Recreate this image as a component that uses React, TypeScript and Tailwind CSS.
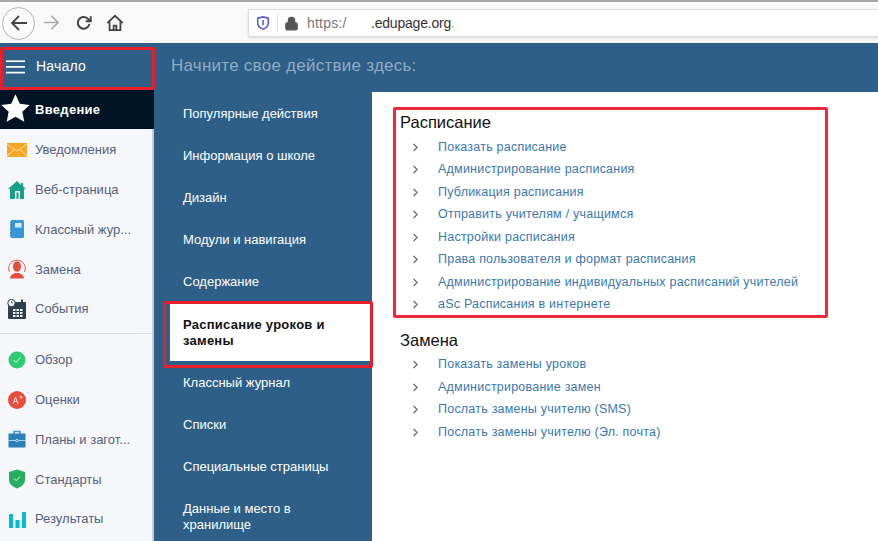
import { ChevronRight, Lock } from 'lucide-react';
import type { ReactNode } from 'react';

const icons: Record<string, ReactNode> = {
  mail: (
    <svg viewBox="0 0 20 16" className="w-[20px] h-[16px]">
      <rect y="1" width="20" height="14" fill="#f5a623" />
      <path d="M0 2l10 7 10-7M0 14l7-6.500M20 14l-7-6.500" fill="none" stroke="#fde3ae" strokeWidth="1" />
    </svg>
  ),
  home: (
    <svg viewBox="0 0 20 20" className="w-[20px] h-[20px]">
      <path d="M10 1L1 9h2v10h14V9h2l-3-2.700V3h-2v2L10 1z" fill="#16a085" />
      <rect x="8" y="11" width="5" height="8" fill="#f5f7fa" />
      <rect x="9.500" y="12.500" width="2" height="6.500" fill="#16a085" />
    </svg>
  ),
  book: (
    <svg viewBox="0 0 20 20" className="w-[20px] h-[20px]">
      <rect x="3.500" y="1" width="13.500" height="18" rx="1.500" fill="#3498db" />
      <path d="M3 3.500h2M3 6h2M3 8.500h2M3 11h2M3 13.500h2M3 16h2" stroke="#2471a3" strokeWidth="0.800" />
      <rect x="8" y="4" width="6.500" height="4.500" fill="#d6eaf8" />
    </svg>
  ),
  person: (
    <svg viewBox="0 0 20 20" className="w-[20px] h-[20px]">
      <path d="M2.500 13A8.300 8.300 0 1 1 17.500 13" fill="none" stroke="#e74c3c" strokeWidth="0.900" />
      <ellipse cx="10" cy="7.500" rx="4" ry="5.200" fill="#e74c3c" />
      <path d="M3 19.500c.3-3.500 3-4.500 5-5.500h4c2 1 4.700 2 5 5.500z" fill="#e74c3c" />
    </svg>
  ),
  calendar: (
    <svg viewBox="0 0 20 20" className="w-[20px] h-[20px]">
      <rect x="1" y="3" width="18" height="17" rx="1" fill="#2c3e50" />
      <rect x="14" y="0.500" width="2" height="4" fill="#2c3e50" />
      <circle cx="4.500" cy="4" r="3.700" fill="#f5f7fa" stroke="#2c3e50" />
      <path d="M4.500 2v2h1.500" fill="none" stroke="#2c3e50" strokeWidth="0.700" />
      <path d="M6 10h2.500v2H6zM9.500 10H12v2H9.500zM13 10h2.500v2H13zM6 13h2.500v2H6zM9.500 13H12v2H9.500zM13 13h2.500v2H13zM6 16h2.500v2H6zM9.500 16H12v2H9.500zM13 16h2.500v2H13z" fill="#ecf0f1" />
    </svg>
  ),
  check: (
    <svg viewBox="0 0 20 20" className="w-[20px] h-[20px]">
      <circle cx="10" cy="10" r="8.500" fill="#2ecc71" />
      <path d="M6.500 10l2.500 2.500 4.500-5" fill="none" stroke="#e8f8ef" strokeWidth="1" />
    </svg>
  ),
  grade: (
    <svg viewBox="0 0 20 20" className="w-[20px] h-[20px]">
      <circle cx="10" cy="10" r="9" fill="#e74c3c" />
      <path d="M6 14l2.500-7 2.500 7M7 11.500h3M12.500 7h3M14 5.500v3" fill="none" stroke="#fbdcd8" strokeWidth="1" />
    </svg>
  ),
  case: (
    <svg viewBox="0 0 20 20" className="w-[20px] h-[20px]">
      <path d="M7 5V2.500h6V5" fill="none" stroke="#3498db" strokeWidth="1.500" />
      <rect x="1.500" y="4.500" width="17" height="14" fill="#2980b9" />
      <path d="M1.500 11.500h17" stroke="#d6eaf8" strokeWidth="0.800" />
      <circle cx="10" cy="11.500" r="1.300" fill="#2980b9" stroke="#d6eaf8" strokeWidth="0.800" />
    </svg>
  ),
  shield: (
    <svg viewBox="0 0 20 20" className="w-[20px] h-[20px]">
      <path d="M10 .5L18 3v8c0 4-4 7-8 8.500C6 18 2 15 2 11V3z" fill="#27ae60" />
      <path d="M7 9.500l2.200 2.200 3.800-4.200" fill="none" stroke="#dff5e8" strokeWidth="1" />
    </svg>
  ),
  bars: (
    <svg viewBox="0 0 20 20" className="w-[20px] h-[20px]">
      <path d="M2 5h4v14H2zM8.500 11h4v8h-4zM15 3h4v16h-4z" fill="#00bcd4" />
    </svg>
  ),
};

const topItems = [
  { icon: 'mail', label: 'Уведомления' },
  { icon: 'home', label: 'Веб-страница' },
  { icon: 'book', label: 'Классный жур...' },
  { icon: 'person', label: 'Замена' },
  { icon: 'calendar', label: 'События' },
];

const bottomItems = [
  { icon: 'check', label: 'Обзор' },
  { icon: 'grade', label: 'Оценки' },
  { icon: 'case', label: 'Планы и загот...' },
  { icon: 'shield', label: 'Стандарты' },
  { icon: 'bars', label: 'Результаты' },
];

const timetable = [
  'Показать расписание',
  'Администрирование расписания',
  'Публикация расписания',
  'Отправить учителям / учащимся',
  'Настройки расписания',
  'Права пользователя и формат расписания',
  'Администрирование индивидуальных расписаний учителей',
  'aSc Расписания в интернете',
];

const substitutions = [
  'Показать замены уроков',
  'Администрирование замен',
  'Послать замены учителю (SMS)',
  'Послать замены учителю (Эл. почта)',
];

function SideRow({ icon, label }: { icon: string; label: string }) {
  return (
    <div className="h-[39.800px] flex items-center pl-[7px] shrink-0">
      <span className="w-[20px] h-[20px] flex items-center justify-center shrink-0">{icons[icon]}</span>
      <span className="ml-[8px] text-[13px] text-[#56607a] whitespace-nowrap">{label}</span>
    </div>
  );
}

function MenuRow({ children }: { children: ReactNode }) {
  return (
    <div className="h-[42px] flex items-center pl-[29px] pr-[20px] text-[13px] leading-[16px] text-white shrink-0">
      {children}
    </div>
  );
}

function LinkGroup({ title, links }: { title: string; links: string[] }) {
  return (
    <div>
      <h2 className="text-[16.500px] leading-[20px] text-[#111] font-normal">{title}</h2>
      <ul className="mt-[4px]">
        {links.map((link) => (
          <li key={link} className="h-[22.500px] flex items-center">
            <ChevronRight className="w-[13px] h-[13px] ml-[9px] text-[#666]" strokeWidth={2} />
            <span className="ml-[16px] text-[12.500px] tracking-[0.220px] text-[#3a78ae] whitespace-nowrap">{link}</span>
          </li>
        ))}
      </ul>
    </div>
  );
}

export default function App() {
  return (
    <div className="w-[878px] h-[541px] overflow-hidden relative bg-white font-['Liberation_Sans',Arial,sans-serif]">
      {/* browser toolbar */}
      <div className="h-[43px] bg-[#f9f9fa] border-t-2 border-[#a8a8a8] flex items-center relative">
        <div className="ml-[2px] mt-[1px] w-[33px] h-[33px] rounded-full border border-[#b5b5b5] bg-[#fbfbfb] flex items-center justify-center shrink-0">
          <svg viewBox="0 0 20 20" className="w-[20px] h-[20px]" fill="none" stroke="#444" strokeWidth="1.800">
            <path d="M18 10H3M10 3l-7 7 7 7" />
          </svg>
        </div>
        <svg viewBox="0 0 20 20" className="w-[19px] h-[19px] ml-[7px] shrink-0" fill="none" stroke="#aaa" strokeWidth="1.600">
          <path d="M2 10h15M10 3l7 7-7 7" />
        </svg>
        <svg viewBox="0 0 20 20" className="w-[18px] h-[18px] ml-[14px] shrink-0" fill="none" stroke="#444" strokeWidth="2.200">
          <path d="M16 11a6.500 6.500 0 1 1-2-6l3 2.500" />
          <path d="M17.500 2.500v5.500h-5.500" />
        </svg>
        <svg viewBox="0 0 20 20" className="w-[18px] h-[18px] ml-[13px] shrink-0" fill="none" stroke="#444" strokeWidth="2">
          <path d="M1.500 10L10 2l8.500 8M4 8.500V18h12V8.500M8.500 18v-5h3v5" />
        </svg>
        <div className="ml-[124px] w-[640px] h-[28px] mt-[1px] bg-white border border-[#dcdcdc] border-r-0 rounded-l-[2px] flex items-center shadow-sm shrink-0">
          <svg viewBox="0 0 16 16" className="w-[14px] h-[14px] ml-[7px]" fill="none">
            <path d="M8 1l6 1.500V8c0 3.500-3 6-6 7-3-1-6-3.500-6-7V2.500z" stroke="#5b5bd6" strokeWidth="1.800" />
            <path d="M8 4.500v6" stroke="#5b5bd6" strokeWidth="1.800" />
          </svg>
          <span className="ml-[7px] w-px h-[20px] bg-[#e3e3e3]" />
          <Lock className="w-[15px] h-[15px] ml-[6px] text-[#555] fill-[#555]" strokeWidth={2} />
          <span className="ml-[8px] text-[14px] tracking-[0.200px] text-[#777] w-[64px]">https:/</span>
          <span className="text-[14px] tracking-[-0.200px] text-[#333]">.edupage.org</span>
          <span className="text-[11px] text-[#aaa]">,</span>
        </div>
      </div>

      {/* edupage page */}
      <div className="flex h-[498px]">
        <aside className="w-[154px] shrink-0 flex flex-col overflow-hidden">
          <div className="h-[47px] bg-[#2d5f88] flex items-center text-white shrink-0">
            <svg viewBox="0 0 20 16" className="w-[19px] h-[16px] ml-[6px]" fill="#fff">
              <rect y="1" width="20" height="1.800" />
              <rect y="7" width="20" height="1.800" />
              <rect y="13" width="20" height="1.800" />
            </svg>
            <span className="ml-[11px] text-[14px] tracking-[0.200px]">Начало</span>
          </div>
          <div className="h-[39px] bg-[#001324] flex items-center text-white shrink-0">
            <svg viewBox="0 0 24 24" className="w-[31px] h-[31px] -mt-[2px]" fill="#fff">
              <path d="M12 1l3.300 7.300 7.700.9-5.700 5.300 1.500 7.800L12 18.400l-6.800 3.900 1.500-7.800L1 9.200l7.700-.9z" />
            </svg>
            <span className="ml-[4px] text-[13px] font-bold tracking-[0.300px]">Введение</span>
          </div>
          <div className="flex-1 flex flex-col pt-[1px] bg-[#f5f7fa] border-r-[2px] border-[#c9ccd1]">
            <div className="flex flex-col">
              {topItems.map((item) => (
                <SideRow key={item.label} {...item} />
              ))}
            </div>
            <div className="mt-[4px] h-px bg-[#dcdfe4] shrink-0" />
            <div className="mt-[6px] flex flex-col">
              {bottomItems.map((item) => (
                <SideRow key={item.label} {...item} />
              ))}
            </div>
          </div>
        </aside>

        <div className="flex-1 flex flex-col bg-[#2d5f88] min-w-0">
          <div className="h-[49px] flex items-center pl-[17px] pb-[4px] text-[17px] tracking-[0.250px] text-[#8fabc3] shrink-0">
            Начните свое действие здесь:
          </div>
          <div className="flex flex-1 min-h-0">
            <nav className="w-[218px] shrink-0 flex flex-col pt-[1px]">
              <MenuRow>Популярные действия</MenuRow>
              <MenuRow>Информация о школе</MenuRow>
              <MenuRow>Дизайн</MenuRow>
              <MenuRow>Модули и навигация</MenuRow>
              <MenuRow>Содержание</MenuRow>
              <div className="h-[57px] my-[1px] ml-[16px] bg-white flex items-center pl-[13px] pr-[30px] text-[13px] tracking-[0.250px] leading-[16px] font-bold text-[#111] shrink-0">
                Расписание уроков и замены
              </div>
              <MenuRow>Классный журнал</MenuRow>
              <MenuRow>Списки</MenuRow>
              <MenuRow>Специальные страницы</MenuRow>
              <div className="mt-[13px] pl-[29px] pr-[50px] text-[13px] leading-[16px] text-white">
                Данные и место в хранилище
              </div>
            </nav>
            <main className="flex-1 bg-white pl-[28px] pt-[20px]">
              <LinkGroup title="Расписание" links={timetable} />
              <div className="mt-[13.500px]">
                <LinkGroup title="Замена" links={substitutions} />
              </div>
            </main>
          </div>
        </div>
      </div>

      {/* red annotations drawn over the screenshot */}
      <div className="absolute left-0 top-[47px] w-[155px] h-[43px] border-[3px] border-[#e8202c] rounded-[2px]" />
      <div className="absolute left-[163px] top-[301px] w-[210px] h-[67px] border-[3px] border-[#e8202c] rounded-[2px]" />
      <div className="absolute left-[393px] top-[107px] w-[435px] h-[211px] border-[3px] border-[#ee2a36] rounded-[2px]" />
    </div>
  );
}
